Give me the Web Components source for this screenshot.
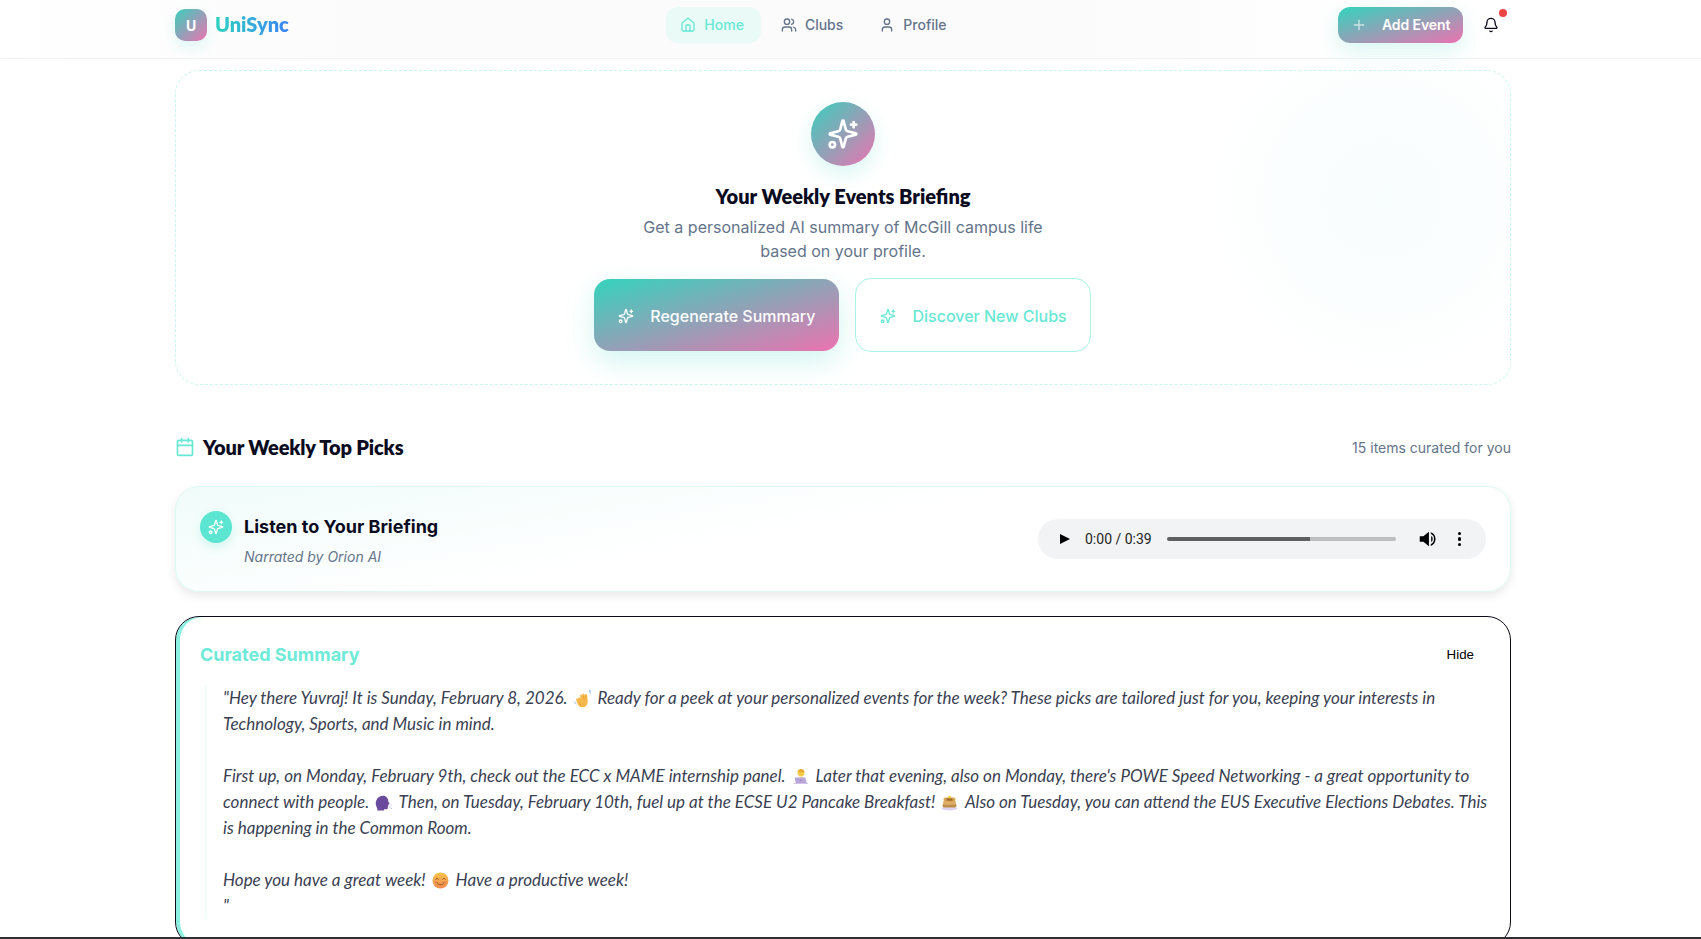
<!DOCTYPE html>
<html lang="en">
<head>
<meta charset="utf-8">
<title>UniSync</title>
<style>
  html, body { margin: 0; height: 100%; overflow: hidden; background: #fff; }
  body { font-family: Inter, "Liberation Sans", sans-serif; }
</style>
</head>
<body>
<uni-app>
  <top-bar slot="bar">
    <nav-link icon="house" active>Home</nav-link>
    <nav-link icon="users">Clubs</nav-link>
    <nav-link icon="user">Profile</nav-link>
  </top-bar>
  <hero-card
    heading="Your Weekly Events Briefing"
    line1="Get a personalized AI summary of McGill campus life"
    line2="based on your profile.">
    <grad-button icon="sparkles">Regenerate Summary</grad-button>
    <grad-button icon="sparkles" outline>Discover New Clubs</grad-button>
  </hero-card>
  <section-head note="15 items curated for you">Your Weekly Top Picks</section-head>
  <audio-card heading="Listen to Your Briefing" sub="Narrated by Orion AI"></audio-card>
  <summary-card heading="Curated Summary">"Hey there Yuvraj! It is Sunday, February 8, 2026. <emoji-art kind="wave"></emoji-art> Ready for a peek at your personalized events for the week? These picks are tailored just for you, keeping your interests in<br>Technology, Sports, and Music in mind.<br><br>First up, on Monday, February 9th, check out the ECC x MAME internship panel. <emoji-art kind="laptop"></emoji-art> Later that evening, also on Monday, there's POWE Speed Networking - a great opportunity to<br>connect with people. <emoji-art kind="speak"></emoji-art> Then, on Tuesday, February 10th, fuel up at the ECSE U2 Pancake Breakfast! <emoji-art kind="pancake"></emoji-art> Also on Tuesday, you can attend the EUS Executive Elections Debates. This<br>is happening in the Common Room.<br><br>Hope you have a great week! <emoji-art kind="smile"></emoji-art> Have a productive week!<br>"</summary-card>
</uni-app>

<script>
const ICONS = {
  house: '<path d="M15 21v-8a1 1 0 0 0-1-1h-4a1 1 0 0 0-1 1v8"/><path d="M3 10a2 2 0 0 1 .709-1.528l7-5.999a2 2 0 0 1 2.582 0l7 5.999A2 2 0 0 1 21 10v9a2 2 0 0 1-2 2H5a2 2 0 0 1-2-2z"/>',
  users: '<path d="M16 21v-2a4 4 0 0 0-4-4H6a4 4 0 0 0-4 4v2"/><circle cx="9" cy="7" r="4"/><path d="M22 21v-2a4 4 0 0 0-3-3.87"/><path d="M16 3.13a4 4 0 0 1 0 7.75"/>',
  user: '<path d="M19 21v-2a4 4 0 0 0-4-4H9a4 4 0 0 0-4 4v2"/><circle cx="12" cy="7" r="4"/>',
  plus: '<path d="M5 12h14"/><path d="M12 5v14"/>',
  bell: '<path d="M10.268 21a2 2 0 0 0 3.464 0"/><path d="M3.262 15.326A1 1 0 0 0 4 17h16a1 1 0 0 0 .74-1.673C19.41 13.956 18 12.499 18 8A6 6 0 0 0 6 8c0 4.499-1.411 5.956-2.738 7.326"/>',
  calendar: '<path d="M8 2v4"/><path d="M16 2v4"/><rect x="3" y="4" width="18" height="18" rx="2"/><path d="M3 10h18"/>',
  sparkles: '<path d="M9.937 15.5A2 2 0 0 0 8.5 14.063l-6.135-1.582a.5.5 0 0 1 0-.962L8.5 9.936A2 2 0 0 0 9.937 8.5l1.582-6.135a.5.5 0 0 1 .963 0L14.063 8.5A2 2 0 0 0 15.5 9.937l6.135 1.581a.5.5 0 0 1 0 .964L15.5 14.063a2 2 0 0 0-1.437 1.437l-1.582 6.135a.5.5 0 0 1-.963 0z"/><path d="M20 3v4"/><path d="M22 5h-4"/><circle cx="4" cy="20" r="2"/>'
};

class UiIcon extends HTMLElement {
  constructor() {
    super();
    const size = this.getAttribute('size') || 16;
    const sw = this.getAttribute('stroke') || 2;
    this.attachShadow({ mode: 'open' }).innerHTML = `
      <style>
        :host { display: inline-flex; flex: none; width: ${size}px; height: ${size}px; }
        svg { width: 100%; height: 100%; fill: none; stroke: currentColor; stroke-width: ${sw}; stroke-linecap: round; stroke-linejoin: round; }
      </style>
      <svg viewBox="0 0 24 24">${ICONS[this.getAttribute('name')] || ''}</svg>`;
  }
}
customElements.define('ui-icon', UiIcon);

// small colour emoji, there is no emoji font in the sandbox
const EMOJI = {
  wave: '<g transform="translate(-1.8 -1) scale(1.2)"><path d="M5 7.5c.7-.6 1.500-.3 2 .4L6.600 5.600c-.3-1 1.200-1.500 1.700-.4l.5 1.100-.3-1.600c-.2-1.100 1.400-1.400 1.700-.3l.5 1.700.1-1.100c.1-1 1.500-1 1.600.1l.5 4.600c.3 2.900-1.300 5.500-4 5.700-2.100.2-3.500-1-4.300-2.900L3.300 9.100c-.4-1 .9-1.700 1.700-.8z" fill="#f7b84b"/><path d="M5.600 11l1.800 2.600M9 5.400l.8 3M11 5l.6 3" stroke="#e49a2d" stroke-width=".6" fill="none"/><path d="M14 2.200c.9.300 1.500.9 1.800 1.800M13.900 .9c1.300.3 2.400 1.300 2.900 2.700M1.900 10.500c.3 1 .9 1.700 1.800 2.100" stroke="#7fb8e8" stroke-width=".8" fill="none"/></g>',
  laptop: '<circle cx="9" cy="5" r="3.400" fill="#f7c948"/><path d="M5.600 4.600C5.600 2 7.300.9 9 .9s3.500 1.200 3.400 3.800l-1-.8c-1 .3-3.300.2-4.500-.5z" fill="#e8a92e"/><path d="M4 15c.2-3.500 2.200-6 5-6s4.800 2.500 5 6z" fill="#f6d57a"/><path d="M2.500 9.500h10.700l1.600 5.600H3.800z" fill="#b8a6d9"/><rect x="1.500" y="15" width="14.500" height="1" rx=".5" fill="#cfc2e6"/><circle cx="8.600" cy="12.300" r=".8" fill="#8f7bb8"/>',
  speak: '<path d="M2.300 16.500c.3-1.900-.4-3-1-4.300C.3 9.900.6 6.500 2.500 4.200 4.300 2 7.300 1.200 9.700 2c2.200.8 3.500 2.700 3.500 4.800 0 .9.900 2 1.300 2.700.2.500-.1.800-.8.900l-.5.100c.2.700.3 1.300-.2 1.600.3.500.2 1-.3 1.300.2 1.200-.4 2-1.700 1.900l-1.700-.2-.2 1.400z" fill="#6a4a9c"/><circle cx="15" cy="13" r=".6" fill="#9a82c8"/><circle cx="16" cy="11" r=".5" fill="#9a82c8"/><circle cx="16.200" cy="14.500" r=".5" fill="#9a82c8"/>',
  pancake: '<ellipse cx="8.500" cy="14.300" rx="8" ry="2.200" fill="#ddd3ee"/><rect x="1.500" y="9.600" width="14" height="4" rx="2" fill="#c08d48"/><rect x="2" y="6.800" width="13" height="4" rx="2" fill="#dcae66"/><rect x="2.500" y="3.500" width="12" height="4.200" rx="2" fill="#d7a557"/><path d="M5.500 4.500c1-1 5-1 6 0v2c-.5.700-1 .700-1.300 0-.5 1-1.200 1-1.700 0-.6.800-1.300.8-1.800.100-.6.300-1.200 0-1.200-.5z" fill="#a8732d"/><rect x="7.200" y="1.800" width="3" height="2.400" rx=".6" fill="#f6d547"/>',
  smile: '<defs><linearGradient id="sm" x1="0" y1="0" x2="0" y2="1"><stop offset="0" stop-color="#fbc34a"/><stop offset="1" stop-color="#f2894f"/></linearGradient></defs><circle cx="8.500" cy="8.500" r="8" fill="url(#sm)"/><path d="M3.800 7.200c.6-1.100 2-1.100 2.600 0M10.600 7.200c.6-1.100 2-1.100 2.600 0" stroke="#7a4a22" stroke-width=".9" fill="none" stroke-linecap="round"/><path d="M4.800 10.300c.9 1.800 2.200 2.400 3.700 2.400s2.800-.6 3.700-2.400" stroke="#7a4a22" stroke-width=".9" fill="none" stroke-linecap="round"/><ellipse cx="3.600" cy="10.200" rx="1.400" ry=".9" fill="#f0735a" opacity=".55"/><ellipse cx="13.400" cy="10.200" rx="1.400" ry=".9" fill="#f0735a" opacity=".55"/>'
};

class EmojiArt extends HTMLElement {
  constructor() {
    super();
    this.attachShadow({ mode: 'open' }).innerHTML = `
      <style>
        :host { display: inline-block; width: 17px; height: 17px; margin: 0 3px 0 2px; vertical-align: -3px; }
        svg { display: block; width: 100%; height: 100%; }
      </style>
      <svg viewBox="0 0 17 17">${EMOJI[this.getAttribute('kind')] || ''}</svg>`;
  }
}
customElements.define('emoji-art', EmojiArt);

class UniApp extends HTMLElement {
  constructor() {
    super();
    this.attachShadow({ mode: 'open' }).innerHTML = `
      <style>
        :host { display: grid; grid-template-rows: 59px 1fr 2px; height: 939px; overflow: hidden; }
        main { min-height: 0; overflow: hidden; }
        .col { width: 1336px; margin-left: 175px; padding-top: 11px; display: flex; flex-direction: column; }
        footer { background: #2f2f33; }
      </style>
      <slot name="bar"></slot>
      <main><div class="col"><slot></slot></div></main>
      <footer></footer>`;
  }
}
customElements.define('uni-app', UniApp);

class TopBar extends HTMLElement {
  constructor() {
    super();
    this.attachShadow({ mode: 'open' }).innerHTML = `
      <style>
        :host {
          display: block; box-sizing: border-box; height: 59px;
          border-bottom: 1px solid #f1f3f5;
          background: linear-gradient(90deg, #fff 0, #fbfbfc 22%, #fbfbfc 62%, #fff 82%);
        }
        .in { width: 1336px; margin-left: 175px; height: 50px; display: flex; align-items: center; justify-content: space-between; }
        .logo { display: flex; align-items: center; gap: 8px; }
        .mark {
          width: 32px; height: 32px; border-radius: 10px; display: grid; place-items: center;
          background: linear-gradient(135deg, #38d0bd, #ec72b0); color: #fff;
          font: 700 14px Inter, sans-serif; box-shadow: 0 6px 14px rgba(45,212,191,.14);
        }
        .name {
          font: 800 20px Lato, sans-serif; margin-bottom: 2px;
          background: linear-gradient(90deg, #2dd4bf, #3b82f6);
          -webkit-background-clip: text; background-clip: text; color: transparent;
        }
        nav { display: flex; gap: 6px; margin-left: 2px; }
        .right { display: flex; align-items: center; gap: 8px; }
        .add {
          display: flex; align-items: center; gap: 15px; height: 36px; padding: 0 12px 0 13px; box-sizing: border-box; width: 125px;
          border-radius: 12px; color: #fff; font: 600 14px Inter, sans-serif; white-space: nowrap; letter-spacing: -.1px;
          background: linear-gradient(to bottom right, #33d3bd, #ec72b0);
          box-shadow: 0 8px 22px rgba(45,212,191,.18);
        }
        .add span { margin-bottom: 2px; }
        .add ui-icon { opacity: .65; }
        .bell { position: relative; width: 40px; height: 40px; display: grid; place-items: center; color: #0b0b1a; }
        .dot { position: absolute; top: 4px; right: 4px; width: 8px; height: 8px; border-radius: 50%; background: #ef4444; }
      </style>
      <div class="in">
        <div class="logo"><span class="mark">U</span><span class="name">UniSync</span></div>
        <nav><slot></slot></nav>
        <div class="right">
          <div class="add"><ui-icon name="plus" size="16"></ui-icon><span>Add Event</span></div>
          <div class="bell"><ui-icon name="bell" size="16"></ui-icon><i class="dot"></i></div>
        </div>
      </div>`;
  }
}
customElements.define('top-bar', TopBar);

class NavLink extends HTMLElement {
  constructor() {
    super();
    this.attachShadow({ mode: 'open' }).innerHTML = `
      <style>
        :host {
          display: flex; align-items: center; gap: 8px; height: 36px; padding: 0 16px 0 14px; border-radius: 12px;
          font: 500 14px Inter, sans-serif; color: #64748b; white-space: nowrap;
        }
        :host([active]) { background: #e9faf7; color: #67e8d4; padding-right: 17px; }
        span { margin-bottom: 2px; }
      </style>
      <ui-icon name="${this.getAttribute('icon')}" size="16"></ui-icon><span><slot></slot></span>`;
  }
}
customElements.define('nav-link', NavLink);

class GradButton extends HTMLElement {
  constructor() {
    super();
    this.attachShadow({ mode: 'open' }).innerHTML = `
      <style>
        :host {
          display: flex; align-items: center; gap: 16px; padding: 25px 24px 23px; border-radius: 16px;
          font: 500 16px/24px Inter, sans-serif; white-space: nowrap; color: #fff;
          background: linear-gradient(to bottom right, #33d3bd, #ec72b0);
          box-shadow: 0 10px 28px rgba(45,212,191,.22);
        }
        :host([outline]) { background: #fff; color: #67e8d4; border: 1px solid #aaf3e6; box-shadow: none; padding-right: 23px; }
      </style>
      <ui-icon name="${this.getAttribute('icon')}" size="16"></ui-icon><slot></slot>`;
  }
}
customElements.define('grad-button', GradButton);

class HeroCard extends HTMLElement {
  constructor() {
    super();
    this.attachShadow({ mode: 'open' }).innerHTML = `
      <style>
        :host {
          display: flex; flex-direction: column; align-items: center; box-sizing: border-box; height: 315px; padding: 31px 0 0;
          border: 1px dashed #c8f5ed; border-radius: 24px; text-align: center;
          background: radial-gradient(circle 175px at 1208px 128px, #f8fefd 0, #fbfefe 60%, #fff 100%);
        }
        .disc {
          width: 64px; height: 64px; border-radius: 50%; display: grid; place-items: center; color: #fff;
          background: linear-gradient(135deg, #38d0bd, #ec72b0); box-shadow: 0 8px 20px rgba(45,212,191,.18);
        }
        h2 { margin: 16px 0 5px; font: 800 20px/28px Lato, sans-serif; color: #0b0b1f; }
        p { margin: 0; font: 400 16px/24px Inter, sans-serif; color: #64748b; }
        .row { display: flex; align-items: center; gap: 16px; margin: 15px 1px 0 0; }
      </style>
      <div class="disc"><ui-icon name="sparkles" size="32"></ui-icon></div>
      <h2>${this.getAttribute('heading')}</h2>
      <p>${this.getAttribute('line1')}<br>${this.getAttribute('line2')}</p>
      <div class="row"><slot></slot></div>`;
  }
}
customElements.define('hero-card', HeroCard);

class SectionHead extends HTMLElement {
  constructor() {
    super();
    this.attachShadow({ mode: 'open' }).innerHTML = `
      <style>
        :host { display: flex; align-items: center; justify-content: space-between; height: 28px; margin: 48px 0 25px; }
        .l { display: flex; align-items: center; gap: 8px; color: #0b0b1f; font: 800 20px/28px Lato, sans-serif; letter-spacing: -.15px; }
        ui-icon { color: #67e8d4; }
        .n { font: 400 14px Inter, sans-serif; color: #64748b; }
      </style>
      <div class="l"><ui-icon name="calendar" size="20"></ui-icon><span><slot></slot></span></div>
      <div class="n">${this.getAttribute('note')}</div>`;
  }
}
customElements.define('section-head', SectionHead);

class AudioBar extends HTMLElement {
  constructor() {
    super();
    this.attachShadow({ mode: 'open' }).innerHTML = `
      <style>
        :host {
          display: flex; align-items: center; box-sizing: border-box; width: 448px; height: 40px; padding: 0 20px 0 22px;
          border-radius: 20px; background: #f1f3f4; color: #000; font: 400 14px Roboto, "Liberation Sans", sans-serif;
        }
        .play { width: 0; height: 0; border-left: 10px solid #000; border-top: 5.500px solid transparent; border-bottom: 5.500px solid transparent; }
        .time { margin-left: 15px; color: #222; white-space: nowrap; }
        .track { width: 229px; height: 4px; margin-left: 15px; border-radius: 2px; background: linear-gradient(90deg, #5f5f5f 62.500%, #bdbdbd 62.500%); }
        .vol { width: 22px; height: 22px; margin-left: 21px; display: block; }
        .more { display: flex; flex-direction: column; gap: 2px; margin-left: 19px; }
        .more i { width: 3.500px; height: 3.500px; border-radius: 50%; background: #000; }
      </style>
      <span class="play"></span>
      <span class="time">0:00 / 0:39</span>
      <span class="track"></span>
      <svg class="vol" viewBox="0 0 24 24"><path d="M3 9v6h4l6 5V4L7 9z" fill="#000"/><path d="M15.500 8.500a4.500 4.500 0 0 1 0 7z" fill="#000"/><path d="M15 4.500a8 8 0 0 1 0 15v-1.900a6.200 6.200 0 0 0 0-11.200z" fill="#000"/></svg>
      <span class="more"><i></i><i></i><i></i></span>`;
  }
}
customElements.define('audio-bar', AudioBar);

class AudioCard extends HTMLElement {
  constructor() {
    super();
    this.attachShadow({ mode: 'open' }).innerHTML = `
      <style>
        :host {
          display: flex; align-items: center; justify-content: space-between; box-sizing: border-box; height: 106px; padding: 24px;
          border: 1px solid #dcf9f3; border-radius: 24px; margin-bottom: 24px;
          background: linear-gradient(170deg, #f0fcfa 0, #fff 45%);
          box-shadow: 0 4px 10px rgba(0,0,0,.09);
        }
        .l { display: grid; grid-template-columns: 32px auto; column-gap: 12px; }
        .disc {
          width: 32px; height: 32px; border-radius: 50%; display: grid; place-items: center; color: #fff;
          background: #5ce5d0; box-shadow: 0 4px 10px rgba(45,212,191,.18);
        }
        h3 { margin: 0; font: 700 18px/32px Inter, sans-serif; color: #0b0b1f; white-space: nowrap; }
        em { grid-column: 2; margin-top: 4px; font: italic 400 14px/20px Inter, sans-serif; color: #64748b; }
      </style>
      <div class="l">
        <div class="disc"><ui-icon name="sparkles" size="16"></ui-icon></div>
        <h3>${this.getAttribute('heading')}</h3>
        <em>${this.getAttribute('sub')}</em>
      </div>
      <audio-bar></audio-bar>`;
  }
}
customElements.define('audio-card', AudioCard);

class SummaryCard extends HTMLElement {
  constructor() {
    super();
    this.attachShadow({ mode: 'open' }).innerHTML = `
      <style>
        :host {
          display: block; box-sizing: border-box; height: 330px; padding: 24px;
          border: 1px solid #0b0b1a; border-radius: 24px; background: #fff;
          box-shadow: inset 4px 0 0 #8cf0e0;
        }
        .head { display: flex; align-items: center; justify-content: space-between; height: 28px; padding-right: 12px; }
        h3 { margin: 0; font: 700 18px/28px Inter, sans-serif; color: #6eead8; }
        .hide { font: 400 13.333px "Liberation Sans", sans-serif; color: #000; margin-bottom: 2px; }
        blockquote {
          margin: 16px 0 0 5px; padding-left: 16px; border-left: 2px solid #effcf9;
          font: italic 400 17px/26px Lato, sans-serif; color: #3a3f52; white-space: nowrap;
        }
      </style>
      <div class="head"><h3>${this.getAttribute('heading')}</h3><span class="hide">Hide</span></div>
      <blockquote><slot></slot></blockquote>`;
  }
}
customElements.define('summary-card', SummaryCard);
</script>
</body>
</html>
